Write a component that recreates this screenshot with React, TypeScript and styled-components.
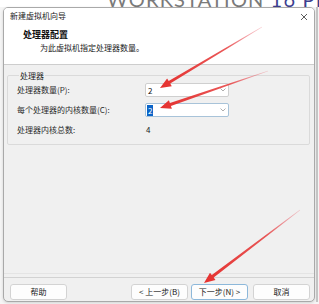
import React from "react";
import styled, { createGlobalStyle } from "styled-components";

const GlobalStyle = createGlobalStyle`
  html, body { margin: 0; padding: 0; width: 319px; height: 304px; overflow: hidden; background: #f5f5f5; }
  body { font-family: "Noto Sans CJK SC", "Noto Sans", sans-serif; }
  * { box-sizing: border-box; }
`;

const Page = styled.div`
  position: relative;
  width: 319px;
  height: 304px;
  display: flex;
  flex-direction: column;
  background: #f5f5f5;
  overflow: hidden;
`;

const Banner = styled.div`
  height: 7px;
  overflow: hidden;
  background: #ffffff;
  padding-left: 107px;
  display: flex;
  flex-shrink: 0;
`;

const BannerText = styled.div`
  margin-top: -11px;
  font-family: Lato, "Noto Sans", sans-serif;
  font-size: 20px;
  line-height: 20px;
  letter-spacing: 1.2px;
  white-space: nowrap;
  color: #7a7a7a;
`;

const BannerAccent = styled.span`
  color: #3d3f8f;
  margin-left: 6px;
`;

const Stage = styled.div`
  display: flex;
  height: 295px;
  padding-left: 3px;
`;

const Dialog = styled.div`
  width: 312px;
  height: 295px;
  border: 1px solid #a9a9a9;
  border-radius: 5px;
  background: #f0f0f0;
  display: flex;
  flex-direction: column;
  overflow: hidden;
  box-shadow: 0 1px 3px rgba(0, 0, 0, 0.15);
`;

const Gutter = styled.div`
  flex: 1;
  display: flex;
  justify-content: center;
`;

const ScrollBar = styled.div`
  width: 2px;
  height: 100%;
  background: #c4c4c4;
`;

const TitleBar = styled.div`
  height: 15px;
  background: #ffffff;
  display: flex;
  align-items: center;
  justify-content: space-between;
  padding: 0 6px 0 6px;
  flex-shrink: 0;
`;

const TitleText = styled.span`
  font-size: 8px;
  line-height: 12px;
  color: #1b1b1b;
`;

const CloseIcon = styled.svg`
  width: 8px;
  height: 8px;
  margin-top: 2px;
`;

const Header = styled.div`
  height: 42px;
  background: #ffffff;
  border-bottom: 1px solid #cdcdcd;
  padding: 6px 0 0 19px;
  display: flex;
  flex-direction: column;
  flex-shrink: 0;
`;

const HeaderTitle = styled.div`
  font-size: 9px;
  line-height: 12px;
  font-weight: 700;
  color: #111;
`;

const HeaderSub = styled.div`
  font-size: 8px;
  line-height: 12px;
  margin-top: 1px;
  padding-left: 17px;
  color: #222;
`;

const Body = styled.div`
  flex: 1;
  padding: 5px 4px 0 3px;
`;

const Group = styled.fieldset`
  margin: 0;
  padding: 2px 0 7px 9px;
  border: 1px solid #dadada;
  border-radius: 2px;
  display: flex;
  flex-direction: column;
  gap: 6px;
`;

const Legend = styled.legend`
  font-size: 8px;
  line-height: 11px;
  padding: 0 1px;
  margin-left: 2px;
  color: #222;
`;

const Row = styled.div`
  display: grid;
  grid-template-columns: 128px 84px;
  align-items: center;
  height: 14px;
`;

const Label = styled.span`
  font-size: 8px;
  line-height: 12px;
  color: #2a2a2a;
`;

const Value = styled.span`
  font-size: 8px;
  line-height: 12px;
  color: #222;
  padding-left: 1px;
`;

const Select = styled.div<{ $focused?: boolean }>`
  height: 14px;
  background: #ffffff;
  border: 1px solid ${(p) => (p.$focused ? "#a8c3d9" : "#cfcfcf")};
  border-radius: 2px;
  display: flex;
  align-items: center;
  justify-content: space-between;
  padding: 0 2px 0 1px;
  font-size: 8px;
  color: #111;
`;

const SelectValue = styled.span<{ $selected?: boolean }>`
  display: inline-flex;
  align-items: center;
  height: 11px;
  padding: 0 1px;
  line-height: 11px;
  background: ${(p) => (p.$selected ? "#0a64c8" : "transparent")};
  color: ${(p) => (p.$selected ? "#ffffff" : "#111")};
`;

const Chevron = styled.svg`
  width: 6px;
  height: 4px;
`;

const Footer = styled.div`
  border-top: 1px solid #e4e4e4;
  padding-top: 3px;
  flex-shrink: 0;
`;

const Etched = styled.div`
  border-top: 1px solid #d2d2d2;
  padding: 6px 4px 1px 6px;
  display: flex;
  align-items: center;
`;

const Spacer = styled.div`
  flex: 1;
`;

const Button = styled.button<{ $primary?: boolean; $gap?: number }>`
  width: 57px;
  height: 16px;
  margin-left: ${(p) => p.$gap ?? 0}px;
  padding: 0;
  background: #fdfdfd;
  border: 1px solid ${(p) => (p.$primary ? "#8db8da" : "#d3d3d3")};
  border-radius: 3px;
  font-family: "Noto Sans CJK SC", "Noto Sans", sans-serif;
  font-size: 8px;
  line-height: 12px;
  color: #222;
`;

const ArrowLayer = styled.svg`
  position: absolute;
  left: 0;
  top: 0;
  width: 319px;
  height: 304px;
  pointer-events: none;
`;

type Pt = [number, number];

function arrowPoints(s: Pt, t: Pt): string {
  const dx = t[0] - s[0];
  const dy = t[1] - s[1];
  const L = Math.hypot(dx, dy);
  const ux = dx / L;
  const uy = dy / L;
  const nx = -uy;
  const ny = ux;
  const headLen = 11;
  const headW = 4.5;
  const w0 = 0.3;
  const w1 = 1.5;
  const bx = t[0] - ux * headLen;
  const by = t[1] - uy * headLen;
  const pts: Pt[] = [
    [s[0] + nx * w0, s[1] + ny * w0],
    [bx + nx * w1, by + ny * w1],
    [bx + nx * headW, by + ny * headW],
    [t[0], t[1]],
    [bx - nx * headW, by - ny * headW],
    [bx - nx * w1, by - ny * w1],
    [s[0] - nx * w0, s[1] - ny * w0],
  ];
  return pts.map((p) => `${p[0].toFixed(1)},${p[1].toFixed(1)}`).join(" ");
}

const arrows: { id: string; s: Pt; t: Pt }[] = [
  { id: "a1", s: [262, 27], t: [160, 88] },
  { id: "a2", s: [268, 71], t: [160, 108] },
  { id: "a3", s: [300, 210], t: [204, 283] },
];

const Arrows: React.FC = () => (
  <ArrowLayer viewBox="0 0 319 304">
    <defs>
      {arrows.map((a) => (
        <linearGradient
          key={a.id}
          id={`g-${a.id}`}
          gradientUnits="userSpaceOnUse"
          x1={a.s[0]}
          y1={a.s[1]}
          x2={a.t[0]}
          y2={a.t[1]}
        >
          <stop offset="0" stopColor="#e84a5a" stopOpacity="0.25" />
          <stop offset="0.35" stopColor="#e63a3a" stopOpacity="0.85" />
          <stop offset="1" stopColor="#e5312f" stopOpacity="1" />
        </linearGradient>
      ))}
    </defs>
    {arrows.map((a) => (
      <polygon key={a.id} points={arrowPoints(a.s, a.t)} fill={`url(#g-${a.id})`} />
    ))}
  </ArrowLayer>
);

const ChevronIcon = () => (
  <Chevron viewBox="0 0 6 4">
    <polyline points="0.5,0.5 3,3 5.5,0.5" fill="none" stroke="#9a9a9a" strokeWidth="0.8" />
  </Chevron>
);

export default function App() {
  return (
    <Page>
      <GlobalStyle />
      <Banner>
        <BannerText>
          WORKSTATION<BannerAccent>16 PRO</BannerAccent>
        </BannerText>
      </Banner>
      <Stage>
        <Dialog>
          <TitleBar>
            <TitleText>新建虚拟机向导</TitleText>
            <CloseIcon viewBox="0 0 8 8">
              <path d="M1 1 L7 7 M7 1 L1 7" stroke="#333" strokeWidth="0.8" />
            </CloseIcon>
          </TitleBar>
          <Header>
            <HeaderTitle>处理器配置</HeaderTitle>
            <HeaderSub>为此虚拟机指定处理器数量。</HeaderSub>
          </Header>
          <Body>
            <Group>
              <Legend>处理器</Legend>
              <Row>
                <Label>处理器数量(P):</Label>
                <Select>
                  <SelectValue>2</SelectValue>
                  <ChevronIcon />
                </Select>
              </Row>
              <Row>
                <Label>每个处理器的内核数量(C):</Label>
                <Select $focused>
                  <SelectValue $selected>2</SelectValue>
                  <ChevronIcon />
                </Select>
              </Row>
              <Row>
                <Label>处理器内核总数:</Label>
                <Value>4</Value>
              </Row>
            </Group>
          </Body>
          <Footer>
            <Etched>
              <Button>帮助</Button>
              <Spacer />
              <Button>&lt; 上一步(B)</Button>
              <Button $primary $gap={3}>下一步(N) &gt;</Button>
              <Button $gap={5}>取消</Button>
            </Etched>
          </Footer>
        </Dialog>
        <Gutter>
          <ScrollBar />
        </Gutter>
      </Stage>
      <Arrows />
    </Page>
  );
}
